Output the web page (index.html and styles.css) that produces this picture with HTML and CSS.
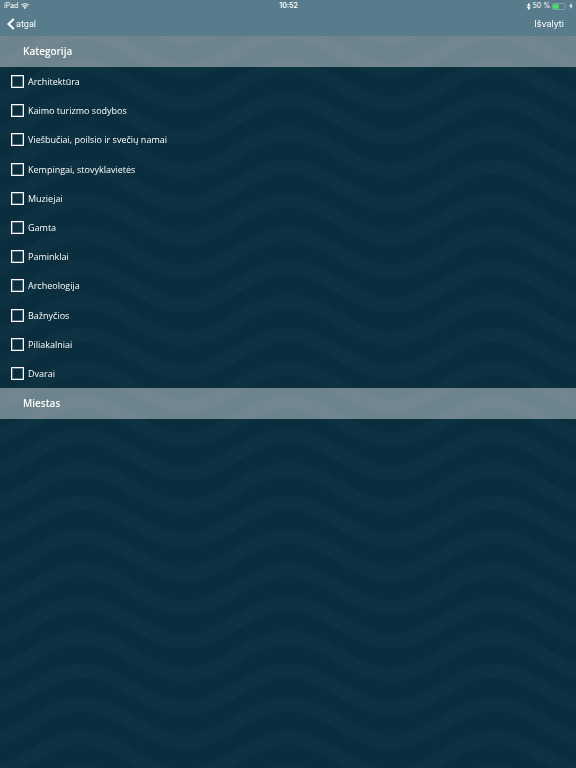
FILE: index.html
```html
<!DOCTYPE html>
<html lang="lt">
<head>
<meta charset="utf-8">
<meta name="viewport" content="width=device-width, initial-scale=1">
<title>Kategorija</title>
<link rel="stylesheet" href="styles.css">
</head>
<body>
<svg class="waves" aria-hidden="true">
  <defs>
    <pattern id="wave" x="81.6" y="32.3" width="206.4" height="33.6" patternUnits="userSpaceOnUse">
      <g fill="none" stroke="#0e3242" stroke-width="13.6">
        <path d="M-103.2 4.4C-65.6 4.4-37.6-33.6 0-33.6S65.6 4.4 103.2 4.4 168.8-33.6 206.4-33.6 272 4.4 309.6 4.4"/>
        <path d="M-103.2 38C-65.6 38-37.6 0 0 0S65.6 38 103.2 38 168.8 0 206.4 0 272 38 309.6 38"/>
        <path d="M-103.2 71.6C-65.6 71.6-37.6 33.6 0 33.6S65.6 71.6 103.2 71.6 168.8 33.6 206.4 33.6 272 71.6 309.6 71.6"/>
      </g>
    </pattern>
  </defs>
  <rect width="100%" height="100%" fill="url(#wave)"/>
</svg>
<header class="top">
  <div class="status">
    <div class="status-side">
      <span>iPad</span>
      <svg class="wifi" viewBox="0 0 16 12" aria-hidden="true">
        <path d="M1 4.500a10 10 0 0 1 14 0M3.600 7.200a6.200 6.200 0 0 1 8.800 0" fill="none" stroke="#fff" stroke-width="2.200"/>
        <path d="M8 12 5.500 9.300a3.600 3.600 0 0 1 5 0z" fill="#fff"/>
      </svg>
    </div>
    <span class="time">10:52</span>
    <div class="status-side status-right">
      <svg class="bluetooth" viewBox="0 0 8 12" aria-hidden="true">
        <path d="M1 3.300 7 8.500 4 11.200V.8l3 2.700L1 8.700" fill="none" stroke="#fff" stroke-width="1.600"/>
      </svg>
      <span>50 %</span>
      <svg class="battery" viewBox="0 0 30 14" aria-hidden="true">
        <rect x="1" y="1" width="25" height="12" rx="2.500" fill="none" stroke="#9db3bd" stroke-width="1.200"/>
        <rect x="2.500" y="2.500" width="11" height="9" rx="1" fill="#4cdf62"/>
        <path d="M27.500 5v4q2-2 0-4" fill="#b6c6cd"/>
      </svg>
      <svg class="bolt" viewBox="0 0 6 10" aria-hidden="true">
        <path d="M4 0 0 5.600h2.600L2 10l4-5.600H3.400z" fill="#fff"/>
      </svg>
    </div>
  </div>
  <nav class="bar">
    <button class="back" type="button">
      <svg class="chevron" viewBox="0 0 8 12" aria-hidden="true">
        <path d="M6.800 1 1.500 6l5.300 5" fill="none" stroke="#fff" stroke-width="2"/>
      </svg>
      <span>atgal</span>
    </button>
    <button class="clear" type="button">Išvalyti</button>
  </nav>
</header>
<main>
  <h2 class="section">Kategorija</h2>
  <div class="options">
    <label class="option"><input type="checkbox"><span>Architektūra</span></label>
    <label class="option"><input type="checkbox"><span>Kaimo turizmo sodybos</span></label>
    <label class="option"><input type="checkbox"><span>Viešbučiai, poilsio ir svečių namai</span></label>
    <label class="option"><input type="checkbox"><span>Kempingai, stovyklavietės</span></label>
    <label class="option"><input type="checkbox"><span>Muziejai</span></label>
    <label class="option"><input type="checkbox"><span>Gamta</span></label>
    <label class="option"><input type="checkbox"><span>Paminklai</span></label>
    <label class="option"><input type="checkbox"><span>Archeologija</span></label>
    <label class="option"><input type="checkbox"><span>Bažnyčios</span></label>
    <label class="option"><input type="checkbox"><span>Piliakalniai</span></label>
    <label class="option"><input type="checkbox"><span>Dvarai</span></label>
  </div>
  <h2 class="section">Miestas</h2>
</main>
</body>
</html>
```
FILE: styles.css
```css
* {
  box-sizing: border-box;
}

body {
  margin: 0;
  background: #0a2e3e;
  color: #fff;
  font-family: "Open Sans", sans-serif;
  font-size: 9px;
}

.waves {
  position: fixed;
  inset: 0;
  z-index: -1;
  width: 100%;
  height: 100%;
}

.top {
  background: #587c8c;
}

.status {
  display: flex;
  align-items: center;
  height: 12px;
  padding: 0 3px 0 4px;
  font: 7px/12px Inter, sans-serif;
}

.status-side {
  display: flex;
  flex: 1;
  align-items: center;
  gap: 3px;
}

.status-right {
  justify-content: flex-end;
  gap: 2px;
}

.time {
  font-weight: 600;
}

.wifi {
  width: 8px;
  height: 6px;
}

.bluetooth {
  width: 5px;
  height: 7px;
}

.battery {
  width: 15px;
  height: 7px;
}

.bolt {
  width: 4px;
  height: 6px;
}

.bar {
  display: flex;
  align-items: center;
  justify-content: space-between;
  height: 24px;
  padding: 0 12px 0 7px;
}

button {
  padding: 0;
  border: 0;
  background: none;
  color: inherit;
  font: inherit;
}

.back {
  display: flex;
  align-items: center;
  gap: 1px;
  font: 9px/12px Roboto, sans-serif;
}

.chevron {
  width: 8px;
  height: 12px;
}

.clear {
  font: 9px/12px Inter, sans-serif;
}

.section {
  margin: 0;
  padding: 0 23px;
  background: rgba(255, 255, 255, 0.41);
  font-size: 10px;
  font-weight: 600;
  line-height: 31px;
}

.options {
  display: grid;
  grid-auto-rows: 1fr;
  min-height: 321px;
}

.option {
  display: flex;
  align-items: center;
  gap: 4px;
  padding: 0 11px;
}

.option input {
  appearance: none;
  width: 13px;
  height: 13px;
  margin: 0;
  border: 1px solid #fff;
  box-shadow: inset 0 0 0 1px rgba(255, 255, 255, 0.3);
}
```
